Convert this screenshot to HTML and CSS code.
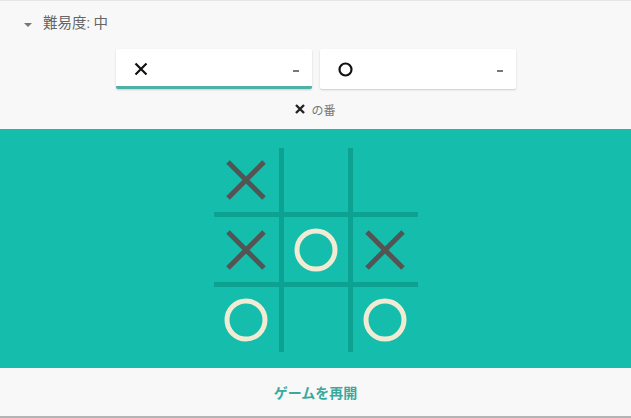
FILE: index.html
```html
<!DOCTYPE html>
<html lang="ja">
	<head>
		<meta charset="UTF-8">
		<title>三目並べ</title>
		<link rel="stylesheet" href="styles.css">
	</head>

	<body>
		<main class="game">
			<div class="level">
				<span class="caret"></span>
				<span>難易度: 中</span>
			</div>

			<div class="players">
				<div class="player active">
					<svg class="mark" width="14" height="14" viewBox="0 0 14 14"><path d="M1.5 1.5 L12.5 12.5 M12.5 1.5 L1.5 12.5" stroke="#111" stroke-width="2.2" fill="none"/></svg>
					<span class="score"></span>
				</div>
				<div class="player">
					<svg class="mark" width="15" height="15" viewBox="0 0 15 15"><circle cx="7.5" cy="7.5" r="6" stroke="#111" stroke-width="2.2" fill="none"/></svg>
					<span class="score"></span>
				</div>
			</div>

			<p class="turn">
				<svg width="10" height="10" viewBox="0 0 10 10"><path d="M1 1 L9 9 M9 1 L1 9" stroke="#222" stroke-width="2.4" fill="none"/></svg>
				<span>の番</span>
			</p>

			<section class="field">
				<div class="board">
					<div class="cell x"></div>
					<div class="cell"></div>
					<div class="cell"></div>
					<div class="cell x"></div>
					<div class="cell o"></div>
					<div class="cell x"></div>
					<div class="cell o"></div>
					<div class="cell"></div>
					<div class="cell o"></div>
				</div>
			</section>

			<div class="restart">ゲームを再開</div>
		</main>

		<script>
// draw the marks into the board cells
{
    const X = '<svg width="42" height="42" viewBox="0 0 42 42"><path d="M3 3 L39 39 M39 3 L3 39" stroke="#545454" stroke-width="5" fill="none"/></svg>';
    const O = '<svg width="44" height="44" viewBox="0 0 44 44"><circle cx="22" cy="22" r="19" stroke="#f2ebd3" stroke-width="5" fill="none"/></svg>';

    document.querySelectorAll(".cell.x").forEach(c => c.innerHTML = X);
    document.querySelectorAll(".cell.o").forEach(c => c.innerHTML = O);
}
		</script>
	</body>
</html>
```

FILE: styles.css
```css
body {
    margin: 0;
    padding: 0;
    background: #f8f8f8;
    font-family: Roboto, "Noto Sans CJK JP", sans-serif;
}

.game {
    height: 418px;
    box-sizing: border-box;
    border-top: 1px solid #e6e6e6;
    border-bottom: 2px solid #b4b4b4;
    display: flex;
    flex-direction: column;
}

.level {
    display: flex;
    align-items: center;
    padding: 14px 0 0 24px;
    height: 18px;
    font-size: 14.5px;
    line-height: 18px;
    color: #666;
}

.caret {
    width: 0; height: 0;
    border-left: 4px solid transparent;
    border-right: 4px solid transparent;
    border-top: 4px solid #777;
    margin: 2px 11px 0 0;
}

.players {
    display: flex;
    justify-content: center;
    gap: 8px;
    margin-top: 16px;
}

.player {
    width: 196px;
    height: 40px;
    box-sizing: border-box;
    background: #fff;
    border-radius: 2px;
    box-shadow: 0 1px 2px rgba(0, 0, 0, .18);
    display: flex;
    align-items: center;
    justify-content: space-between;
    padding: 0 13px 0 18px;
}

.player.active {
    border-bottom: 3px solid #4fb1a6;
    padding-top: 3px;
}

.score {
    width: 6px;
    height: 2px;
    background: #777;
    margin-top: 3px;
}

.turn {
    margin: 12px 0 0;
    height: 16px;
    display: flex;
    align-items: center;
    justify-content: center;
    gap: 6px;
    font-size: 12px;
    color: #777;
}

.field {
    margin-top: 12px;
    height: 239px;
    background: #14bdac;
    display: flex;
    justify-content: center;
    padding-top: 19px;
    box-sizing: border-box;
}

/* lines come from the board colour showing through the gaps */
.board {
    width: 204px;
    height: 204px;
    display: grid;
    grid-template-columns: 65px 64px 65px;
    grid-template-rows: 64px 65px 65px;
    gap: 5px;
    background: #0da192;
}

.cell {
    background: #14bdac;
    display: flex;
    align-items: center;
    justify-content: center;
}

.restart {
    flex: 1;
    display: flex;
    align-items: center;
    justify-content: center;
    font-size: 14px;
    font-weight: bold;
    color: #3aa99c;
}
```
